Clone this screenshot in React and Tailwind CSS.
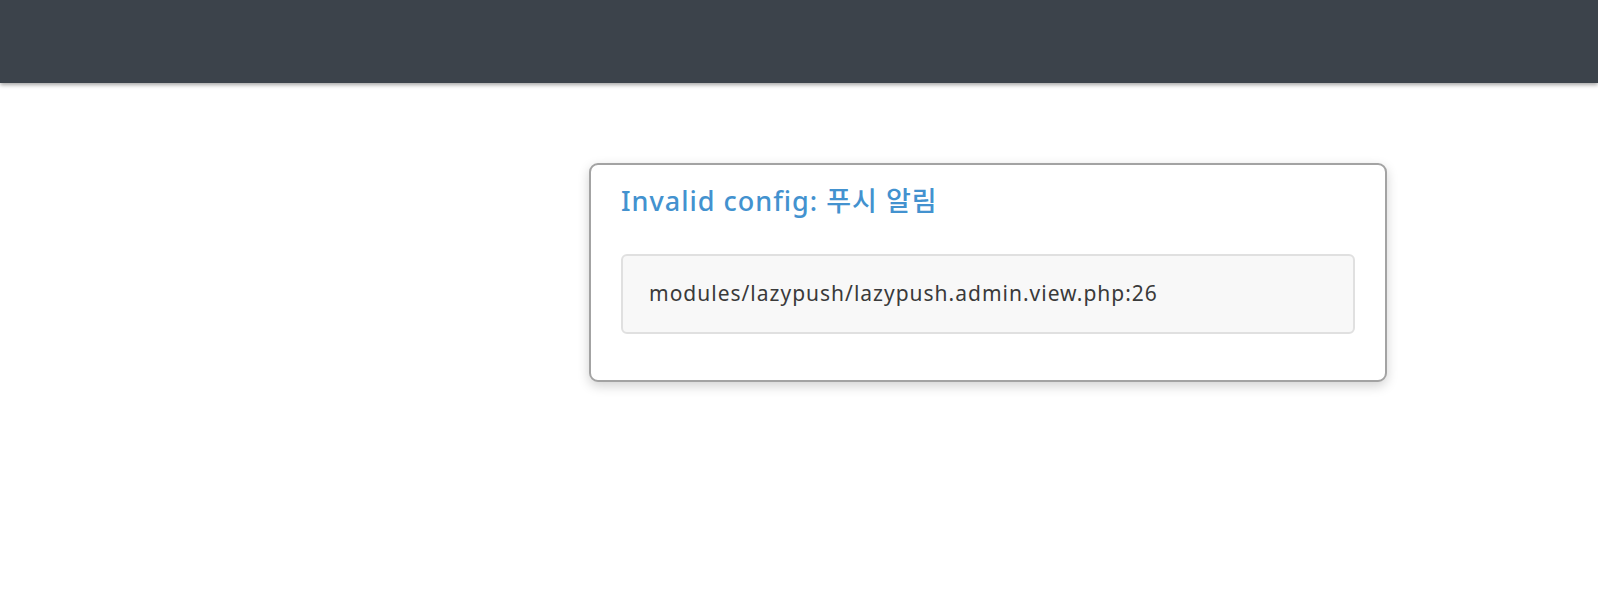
import React from 'react';

const App = () => {
  return (
    <div className="min-h-[600px] bg-white font-['Noto_Sans','Noto_Sans_CJK_KR',sans-serif]">
      {/* Top bar */}
      <div className="h-[83px] bg-[#3c434b] shadow-[0_2px_4px_rgba(0,0,0,0.35)]" />

      {/* Error card */}
      <div className="ml-[589px] mt-[80px] w-[798px] rounded-[9px] border-2 border-[#a3a3a3] bg-white px-[30px] pb-[46px] pt-[16px] shadow-[0_4px_12px_rgba(0,0,0,0.18)]">
        <h1 className="text-[27px] font-medium leading-[40px] tracking-[1px] text-[#4392cf]">
          Invalid config: 푸시 알림
        </h1>
        <div className="mt-[33px] flex h-[80px] items-center rounded-[6px] border-2 border-[#e0e0e0] bg-[#f8f8f8] px-[26px] text-[21px] tracking-[1px] text-[#3a3a3a]">
          modules/lazypush/lazypush.admin.view.php:26
        </div>
      </div>
    </div>
  );
};

export default App;
